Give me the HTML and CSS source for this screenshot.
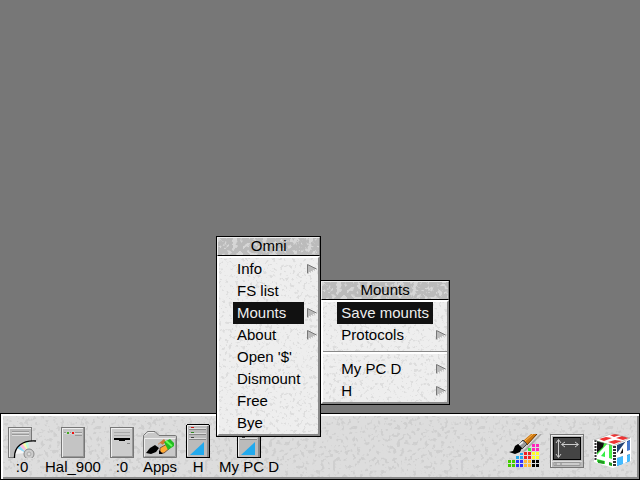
FILE: index.html
```html
<!DOCTYPE html>
<html lang="en">
<head>
  <meta charset="UTF-8">
  <meta name="viewport" content="width=device-width, initial-scale=1.0">
  <title>Desktop</title>
  <link rel="stylesheet" href="styles.css">
</head>
<body>
  <main class="desktop">
    <div class="menu menu-omni">
      <h2 class="menu-title">Omni</h2>
      <ul class="menu-list">
        <li><button class="item more">Info</button></li>
        <li><button class="item">FS list</button></li>
        <li><button class="item more selected">Mounts</button></li>
        <li><button class="item more">About</button></li>
        <li><button class="item">Open '$'</button></li>
        <li><button class="item">Dismount</button></li>
        <li><button class="item">Free</button></li>
        <li><button class="item">Bye</button></li>
      </ul>

      <div class="menu submenu">
        <h2 class="menu-title">Mounts</h2>
        <ul class="menu-list">
          <li><button class="item selected">Save mounts</button></li>
          <li><button class="item more">Protocols</button></li>
          <li class="separator"></li>
          <li><button class="item more">My PC D</button></li>
          <li><button class="item more">H</button></li>
        </ul>
      </div>
    </div>
  </main>

  <footer class="iconbar">
    <div class="devices">
      <button class="device">
        <svg width="28" height="31" viewBox="0 0 28 31">
          <path d="M0 0h24v31H0z" fill="#777"/>
          <path d="M1 1h22v29H1z" fill="#eee"/>
          <path d="M2 2h21v28H2z" fill="#bbb"/>
          <path d="M4 4.500h17M4 7.500h17" stroke="#999"/>
          <path d="M4 5.500h17M4 8.500h17" stroke="#ddd"/>
          <path d="M7 31C7 20 14 13 28 14V31z" fill="#ddd"/>
          <path d="M7 27L9 21 18 26z" fill="#f6f6f6"/>
          <path d="M9 21L11 18 18 26z" fill="#8df"/>
          <path d="M11 18L14 16 19 25z" fill="#fbd"/>
          <path d="M14 16L17 15 20 24z" fill="#ffa"/>
          <path d="M17 15L20 14 21 24z" fill="#bfd"/>
          <path d="M6.500 31C6 20 14 13 28 14" fill="none" stroke="#000" stroke-width="1.300"/>
          <circle cx="21" cy="27" r="5" fill="#ccc" stroke="#888"/>
          <circle cx="21" cy="27" r="2" fill="#ddd" stroke="#aaa"/>
        </svg>
        <span>:0</span>
      </button>
      <button class="device">
        <svg width="24" height="31" viewBox="0 0 24 31">
          <path d="M0 0h24v31H0z" fill="#777"/>
          <path d="M1 1h22v29H1z" fill="#eee"/>
          <path d="M2 2h20v27H2z" fill="#c4c4c4"/>
          <path d="M22.500 1v29M2 29.500h21" stroke="#999"/>
          <path d="M3 5.500h18M14 8.500h7" stroke="#999"/>
          <path d="M3 6.500h18" stroke="#ddd"/>
          <path d="M5 4h4v4H5zM10 4h4v4h-4z" fill="#ccc"/>
          <path d="M6 5h2v2H6z" fill="#4a2"/>
          <path d="M11 5h2v2h-2z" fill="#e11"/>
        </svg>
        <span>Hal_900</span>
      </button>
      <button class="device">
        <svg width="24" height="31" viewBox="0 0 24 31">
          <path d="M0 0h24v31H0z" fill="#777"/>
          <path d="M1 1h22v29H1z" fill="#eee"/>
          <path d="M2 2h20v27H2z" fill="#ccc"/>
          <path d="M22.500 1v29M2 29.500h21" stroke="#999"/>
          <path d="M4 5.500h16M4 8.500h16" stroke="#aaa"/>
          <path d="M4 12h16" stroke="#000" stroke-width="2"/>
          <path d="M9 12.500h6" stroke="#000" stroke-width="3"/>
          <path d="M17 16.500h3" stroke="#888"/>
        </svg>
        <span>:0</span>
      </button>
      <button class="device">
        <svg width="34" height="27" viewBox="0 0 34 27">
          <path d="M.5 26.500V4.500L3.500 1.500Q4 .5 5 .5H12L16 4.500H32.500Q33.500 4.500 33.500 6V26.500z" fill="#c8c8c8" stroke="#777"/>
          <path d="M1.500 25V7.500H32M2 4.500L5 1.500H11" fill="none" stroke="#eee"/>
          <path d="M2 25.500H32.500V8" fill="none" stroke="#999"/>
          <path d="M15 13L21 8 23 11 17 16z" fill="#c73"/>
          <path d="M14 15L18 18 20 14 17 12z" fill="#bbb"/>
          <path d="M3 22L7 17 12 14 16 17 13 21 8 23z" fill="#000"/>
          <path d="M17 17L24 13 27 17 21 22 17 22z" fill="#fa3" stroke="#754"/>
          <path d="M21 11L27 8 31 12 31 15 25 19z" fill="#2b2"/>
          <path d="M23 10L29 15" stroke="#6f5" stroke-width="2"/>
          <path d="M16 19V23H20z" fill="#000"/>
        </svg>
        <span>Apps</span>
      </button>
      <button class="device">
        <svg width="24" height="34" viewBox="0 0 24 34">
          <path d="M0 1H1V0H23V1H24V34H0z" fill="#000"/>
          <path d="M1 1h22v32H1z" fill="#bbb"/>
          <path d="M1.500 32V1.500H22" fill="none" stroke="#eee"/>
          <path d="M21 2h2v31h-2z" fill="#888"/>
          <path d="M3 4.500h17M3 9.500h17M3 14.500h17" stroke="#ddd"/>
          <path d="M3 5.500h17M3 10.500h17M3 15.500h17" stroke="#888"/>
          <path d="M5 3.500h3" stroke="#c11"/>
          <path d="M5 8.500h3" stroke="#382"/>
          <path d="M5 13.500h3" stroke="#444"/>
          <path d="M4 31L18 18V31z" fill="#2ae"/>
        </svg>
        <span>H</span>
      </button>
      <button class="device">
        <svg width="24" height="34" viewBox="0 0 24 34">
          <path d="M0 1H1V0H23V1H24V34H0z" fill="#000"/>
          <path d="M1 1h22v32H1z" fill="#bbb"/>
          <path d="M1.500 32V1.500H22" fill="none" stroke="#eee"/>
          <path d="M21 2h2v31h-2z" fill="#888"/>
          <path d="M3 4.500h17M3 9.500h17M3 14.500h17" stroke="#ddd"/>
          <path d="M3 5.500h17M3 10.500h17M3 15.500h17" stroke="#888"/>
          <path d="M5 13.500h3" stroke="#444"/>
          <path d="M4 31L18 18V31z" fill="#2ae"/>
        </svg>
        <span>My PC D</span>
      </button>
    </div>

    <div class="tasks">
      <button class="task" aria-label="Paint">
        <svg width="34" height="34" viewBox="0 0 34 34">
          <path d="M14 18L32 0H34L18 17z" fill="#aaa"/>
          <!-- swatches -->
          <g shape-rendering="crispEdges">
            <path d="M0 26h3v3H0zM4 26h3v3H4zM0 30h3v3H0zM4 30h3v3H4z" fill="#4c0"/>
            <path d="M8 26h3v3H8zM12 26h3v3h-3zM8 30h3v3H8zM12 30h3v3h-3z" fill="#33f"/>
            <path d="M16 26h3v3h-3zM20 26h3v3h-3zM16 30h3v3h-3zM20 30h3v3h-3z" fill="#fb3"/>
            <path d="M24 26h3v3h-3zM28 26h3v3h-3zM24 30h3v3h-3zM28 30h3v3h-3z" fill="#000"/>
            <path d="M8 22h3v3H8zM12 22h3v3h-3zM12 19h3v2h-3z" fill="#2ae"/>
            <path d="M16 18h3v3h-3zM20 18h3v3h-3zM16 22h3v3h-3zM20 22h3v3h-3z" fill="#e22"/>
            <path d="M24 18h3v3h-3zM28 18h3v3h-3zM24 22h3v3h-3zM28 22h3v3h-3z" fill="#ff2"/>
            <path d="M20 14h3v3h-3z" fill="#3e3"/>
            <path d="M24 10h3v3h-3zM28 10h3v3h-3zM24 14h3v3h-3zM28 14h3v3h-3z" fill="#f2b"/>
          </g>
          <path d="M15 7L23 0H29L19 11z" fill="#c71"/>
          <path d="M17 7L25 0" stroke="#fb5"/>
          <path d="M19 11L29 0" stroke="#630"/>
          <path d="M10 11L15 6 19 10 14 15z" fill="#999" stroke="#444"/>
          <path d="M11 11L15 8" stroke="#eee" stroke-width="2"/>
          <path d="M1 18L5 17 7 12 10 10 14 14 12 18 7 20z" fill="#000"/>
        </svg>
      </button>
      <button class="task" aria-label="Display">
        <svg width="34" height="34" viewBox="0 0 34 34">
          <path d="M0 0h34v34H0z" fill="#777"/>
          <path d="M1 1h32v32H1z" fill="#eee"/>
          <path d="M2 2h31v31H2z" fill="#bbb"/>
          <path d="M3 3h28v23H3z" fill="#000"/>
          <path d="M4 4h26v21H4z" fill="#444"/>
          <path d="M8.500 6V23M6 9L8.500 5.500 11 9M6 20L8.500 23.500 11 20M12 10.500H28M15 8L11.500 10.500 15 13M25 8L28.500 10.500 25 13" fill="none" stroke="#ccc"/>
          <path d="M2 27.500H32" stroke="#ddd"/>
          <path d="M4 28.500H30V31.500H4z" fill="#ccc" stroke="#999"/>
          <path d="M6 29V31M11 29V31" stroke="#888"/>
        </svg>
      </button>
      <button class="task" aria-label="StrongARM">
        <svg width="40" height="36" viewBox="0 0 40 36">
          <path d="M1 7L20 0 39 5V28L21 35 2 29z" fill="#fff"/>
          <path d="M5 8L20 12V33L5 29z" fill="#4e4"/>
          <path d="M5 8L12 10 11 14 5 20z" fill="#111"/>
          <path d="M6 27L12 28V31L6 30zM17 28L20 29V33L17 32z" fill="#292"/>
          <!-- left face -->
          <path d="M16 10L5 22V26L13 28V32L17 33V29L20 30V26L17 25V10z" fill="#fff"/>
          <path d="M13 18V24L9 23z" fill="#3e4"/>
          <!-- right face -->
          <path d="M25 12L38 7V28L25 33z" fill="#247"/>
          <path d="M25 25L31 23V31L25 33zM34 23L38 21V28L34 30z" fill="#4bf"/>
          <path d="M35 9L38 7V19L35 20z" fill="#47c"/>
          <path d="M34 8L25 20V25L31 23V31L35 29V22L38 21V17L35 18V8z" fill="#fff"/>
          <path d="M31 15V20L28 21z" fill="#111"/>
          <path d="M22.500 13V34" stroke="#333" stroke-width="3" stroke-dasharray="2 1"/>
          <path d="M3.500 7V28" stroke="#333" stroke-width="2" stroke-dasharray="2 1"/>
          <path d="M7 6L14 4 20 5 12 8zM18 2L23 1 28 2 22 4zM24 5L30 3 37 5 31 7zM16 9L23 7 30 8 22 11z" fill="#e33"/>
          <path d="M2 7L20 .5 38 5 21 13z" fill="none" stroke="#888" stroke-width=".5"/>
        </svg>
      </button>
    </div>
  </footer>
</body>
</html>
```

FILE: styles.css
```css
* {
  box-sizing: border-box;
}
body {
  margin: 0;
  min-height: 100vh;
  display: flex;
  flex-direction: column;
  background-color: #777;
  color: #000;
  font-family: "Liberation Sans", Arial, sans-serif;
  font-size: 15px;
  position: relative;
}
button {
  padding: 0;
  border: none;
  background: none;
  color: inherit;
  font: inherit;
  cursor: pointer;
}
svg {
  display: block;
}
.desktop {
  flex: 1;
}

/* menus */
.menu {
  position: absolute;
  border: 1px solid #000;
  background-color: #eee;
  z-index: 2;
}
.menu-omni {
  left: 216px;
  bottom: 43px;
}
.submenu {
  left: 100%;
  top: 43px;
}
.menu-title {
  margin: 0;
  height: 19px;
  border: 1px solid;
  border-color: #eee #888 #000 #eee;
  background-color: #bbb;
  background-image: url("data:image/svg+xml,%3Csvg xmlns='http://www.w3.org/2000/svg' width='128' height='64'%3E%3Cfilter id='n' x='0' y='0' width='1' height='1' color-interpolation-filters='sRGB'%3E%3CfeTurbulence type='fractalNoise' baseFrequency='.2' numOctaves='5' seed='4'/%3E%3CfeColorMatrix values='0 0 0 0 .87 0 0 0 0 .87 0 0 0 0 .87 9 0 0 0 -4.6'/%3E%3C/filter%3E%3Crect width='128' height='64' filter='url(%23n)' opacity='.8'/%3E%3C/svg%3E");
  font-size: 15px;
  font-weight: normal;
  line-height: 16px;
  text-align: center;
}
.menu-list {
  margin: 0;
  padding: 0;
  list-style: none;
  border: 2px solid;
  border-color: #fff #888 #888 #fff;
  background-image: url("data:image/svg+xml,%3Csvg xmlns='http://www.w3.org/2000/svg' width='128' height='128'%3E%3Cfilter id='n' x='0' y='0' width='1' height='1' color-interpolation-filters='sRGB'%3E%3CfeTurbulence type='fractalNoise' baseFrequency='.3' numOctaves='4' seed='7' stitchTiles='stitch'/%3E%3CfeColorMatrix values='0 0 0 0 .8 0 0 0 0 .8 0 0 0 0 .8 9 0 0 0 -5.2'/%3E%3C/filter%3E%3Crect width='128' height='128' filter='url(%23n)' opacity='.5'/%3E%3C/svg%3E");
}
.menu-list li {
  padding: 0 14px;
}
.item {
  position: relative;
  display: block;
  width: 100%;
  padding: 0 4px;
  line-height: 22px;
  text-align: left;
  white-space: nowrap;
}
.selected {
  background-color: #111;
  color: #eee;
}
.more::after {
  content: "";
  position: absolute;
  left: calc(100% + 3px);
  top: 6px;
  width: 10px;
  height: 10px;
  background: url("data:image/svg+xml,%3Csvg xmlns='http://www.w3.org/2000/svg' width='10' height='10'%3E%3Cpath d='M.5 .5V9.500L9.500 5z' fill='%23bbb' stroke='%23777'/%3E%3Cpath d='M.5 9.500L9.500 5' stroke='%23eee'/%3E%3C/svg%3E");
}
.menu-list .separator {
  height: 3px;
  margin: 5px 0 4px;
  padding: 0;
  border-top: 1px solid #888;
  border-bottom: 2px solid #fff;
}

/* icon bar */
.iconbar {
  display: flex;
  justify-content: space-between;
  height: 67px;
  border: 1px solid #000;
  box-shadow: inset 2px 2px #fff, inset -2px -2px #888;
  background-color: #ddd;
  background-image: url("data:image/svg+xml,%3Csvg xmlns='http://www.w3.org/2000/svg' width='128' height='128'%3E%3Cfilter id='n' x='0' y='0' width='1' height='1' color-interpolation-filters='sRGB'%3E%3CfeTurbulence type='fractalNoise' baseFrequency='.25' numOctaves='4' seed='9' stitchTiles='stitch'/%3E%3CfeColorMatrix values='0 0 0 0 .75 0 0 0 0 .75 0 0 0 0 .75 9 0 0 0 -5'/%3E%3C/filter%3E%3Crect width='128' height='128' filter='url(%23n)' opacity='.45'/%3E%3C/svg%3E");
}
.devices {
  display: flex;
  align-items: flex-end;
  gap: 9px;
  padding: 0 0 4px 7px;
}
.device {
  display: flex;
  flex-direction: column;
  align-items: center;
  line-height: 17px;
  white-space: nowrap;
}
.tasks {
  display: flex;
  align-items: center;
  gap: 8px;
  padding: 8px 7px 0 0;
}
```
